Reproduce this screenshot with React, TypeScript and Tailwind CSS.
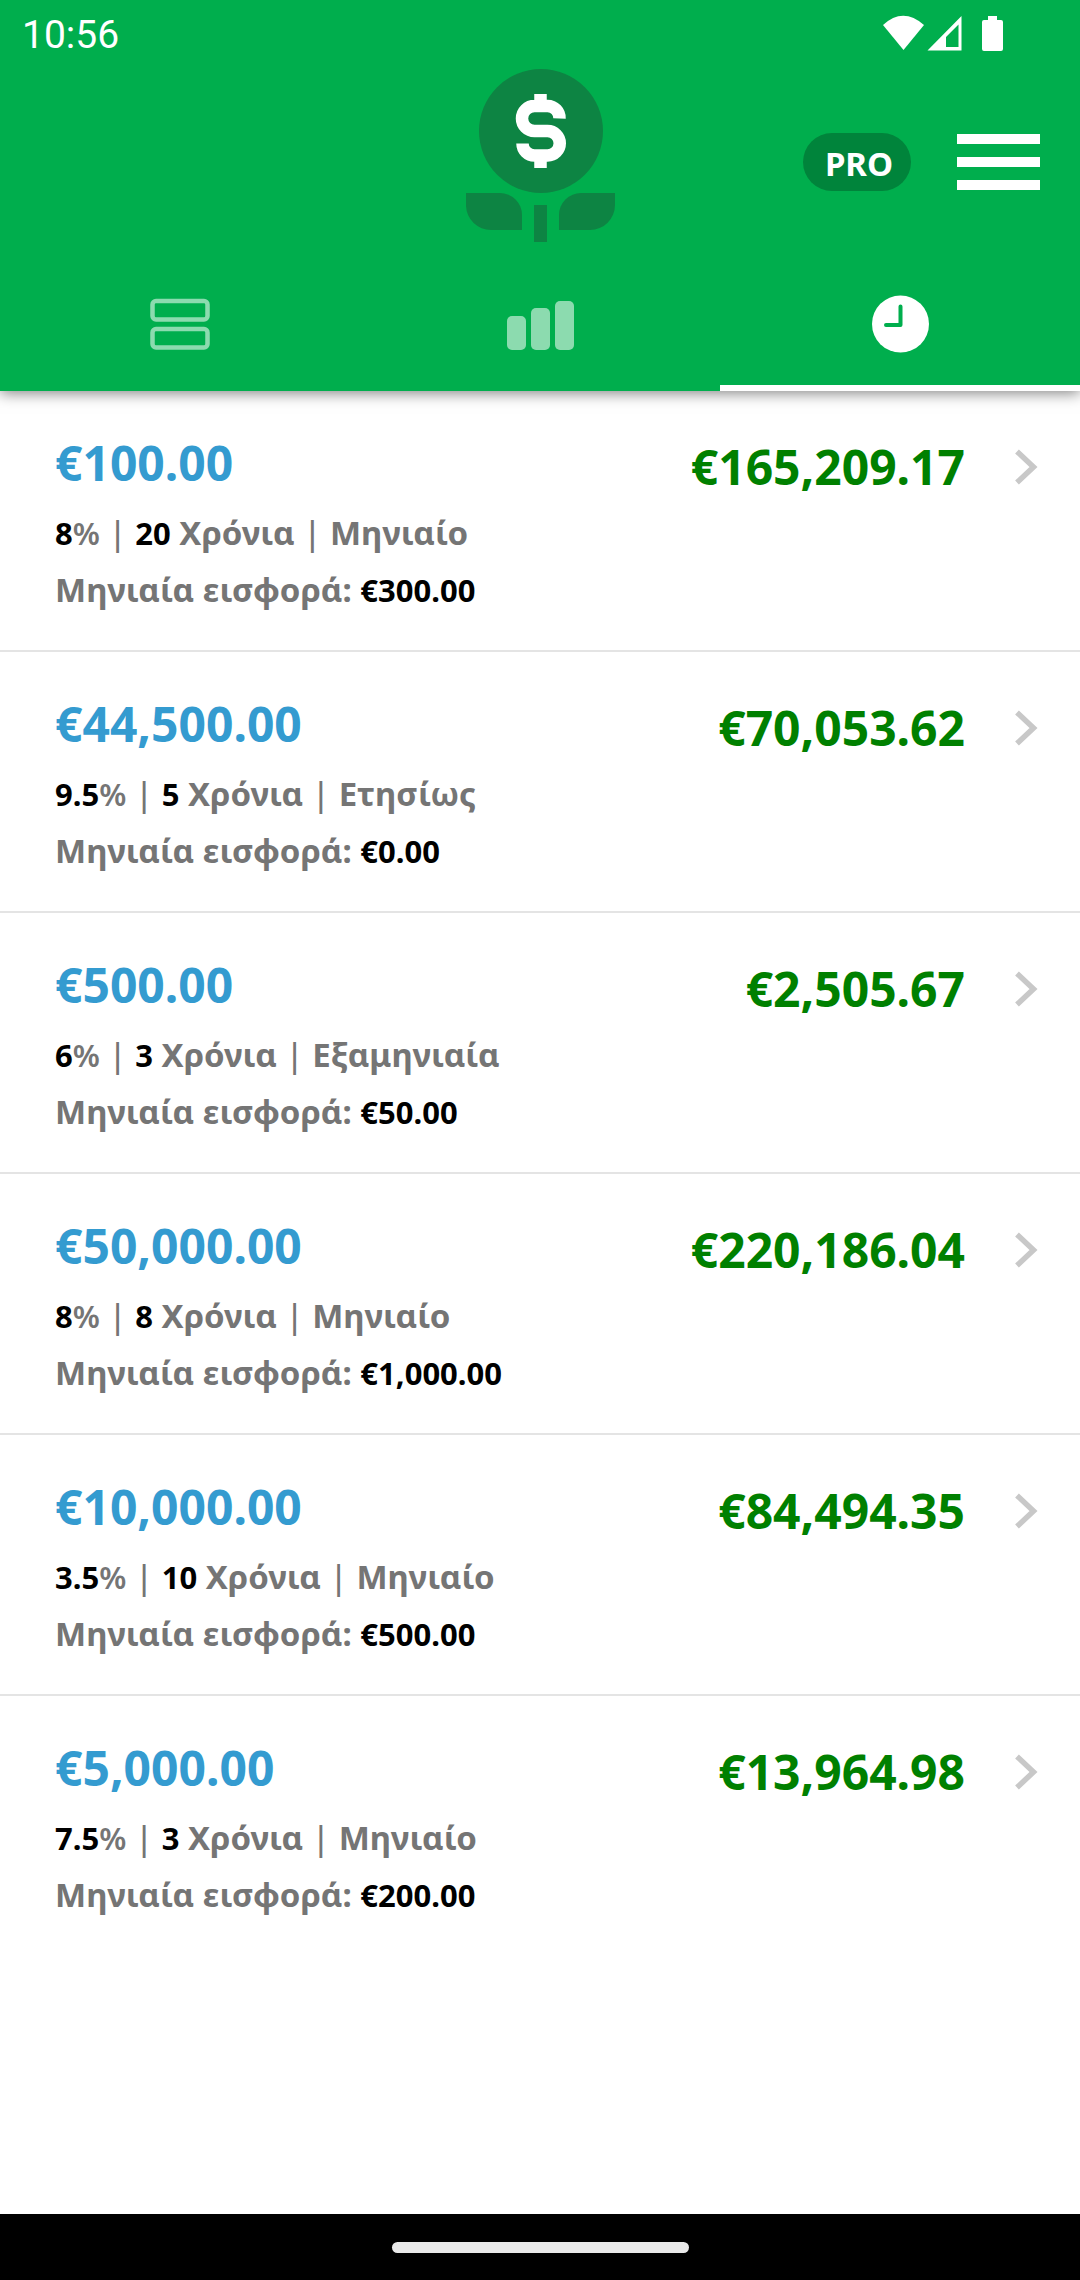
type Investment = {
    initial: string
    rate: string
    years: string
    interval: string
    contribution: string
    total: string
}

const investments: Investment[] = [
    { initial: "€100.00", rate: "8", years: "20", interval: "Μηνιαίο", contribution: "€300.00", total: "€165,209.17" },
    { initial: "€44,500.00", rate: "9.5", years: "5", interval: "Ετησίως", contribution: "€0.00", total: "€70,053.62" },
    { initial: "€500.00", rate: "6", years: "3", interval: "Εξαμηνιαία", contribution: "€50.00", total: "€2,505.67" },
    { initial: "€50,000.00", rate: "8", years: "8", interval: "Μηνιαίο", contribution: "€1,000.00", total: "€220,186.04" },
    { initial: "€10,000.00", rate: "3.5", years: "10", interval: "Μηνιαίο", contribution: "€500.00", total: "€84,494.35" },
    { initial: "€5,000.00", rate: "7.5", years: "3", interval: "Μηνιαίο", contribution: "€200.00", total: "€13,964.98" },
]

function StatusBar() {
    return (
        <div className="flex h-[66px] items-center justify-between pl-[22px] pr-[76px]">
            <span className="pt-1 font-[Roboto,sans-serif] text-[39px] leading-none">10:56</span>
            <svg className="h-[40px] w-[122px]" viewBox="0 0 122 40" fill="#fff" aria-hidden="true">
                <path d="M1 12Q21 -6.500 42 12L21.500 37Z" />
                <path fillRule="evenodd" d="M79.500 3V37.500H45.500ZM76.500 11.500L64 24V34H76.500Z" />
                <path d="M106 3h9v4h4a2 2 0 0 1 2 2v27a2 2 0 0 1-2 2h-17a2 2 0 0 1-2-2V9a2 2 0 0 1 2-2h4Z" />
            </svg>
        </div>
    )
}

function Logo() {
    return (
        <svg className="h-[174px] w-[149px]" viewBox="0 0 149 174" role="img" aria-label="Logo">
            <g fill="#0d8443">
                <circle cx="75" cy="62" r="62" />
                <path d="M0 124h34a22 22 0 0 1 22 22v15H25A25 25 0 0 1 0 137Z" />
                <path d="M149 124h-34a22 22 0 0 0-22 22v15h31a25 25 0 0 0 25-25Z" />
                <path d="M68 136h13v37H68Z" />
            </g>
            <path d="M93.500 49.500a12 12 0 0 0-12-12.500H68.500a12.500 12.500 0 0 0 0 25h13a12 12 0 0 1 0 24.500H68.500a12 12 0 0 1-12-12M74.500 25v8M74.500 91v8" fill="none" stroke="#fff" strokeWidth="12.500" />
        </svg>
    )
}

function CardsIcon() {
    return (
        <svg className="h-[60px] w-[60px]" viewBox="0 0 60 60" fill="none" stroke="currentColor" strokeWidth="4.500" aria-hidden="true">
            <rect x="2.500" y="6" width="55" height="18.500" rx="3.500" />
            <rect x="2.500" y="34" width="55" height="18.500" rx="3.500" />
        </svg>
    )
}

function BarsIcon() {
    return (
        <svg className="h-[60px] w-[68px]" viewBox="0 0 68 60" fill="currentColor" aria-hidden="true">
            <rect x="1" y="21" width="19" height="34" rx="5" />
            <rect x="25" y="13" width="19" height="42" rx="5" />
            <rect x="49" y="6" width="19" height="49" rx="5" />
        </svg>
    )
}

function ClockIcon() {
    return (
        <svg className="h-[60px] w-[60px]" viewBox="0 0 60 60" fill="none" aria-hidden="true">
            <circle cx="30.500" cy="29" r="28.500" fill="currentColor" />
            <path d="M30.500 11.500V30H16" stroke="#00ae4d" strokeWidth="4" strokeLinecap="round" strokeLinejoin="round" />
        </svg>
    )
}

function Header() {
    return (
        <header className="relative z-10 bg-[#00ae4d] text-white shadow-[0_2px_14px_rgba(0,0,0,0.5)]">
            <StatusBar />
            <div className="grid h-[192px] grid-cols-3 items-start">
                <div />
                <div className="flex justify-center pt-[3px]">
                    <Logo />
                </div>
                <div className="flex h-[192px] items-center justify-end gap-[46px] pr-10">
                    <button type="button" className="h-[58px] w-[108px] rounded-full bg-[#00843b] pl-1 pt-0.5 text-[33px] font-bold leading-none">
                        PRO
                    </button>
                    <button type="button" aria-label="Menu" className="flex w-[83px] flex-col gap-[13px]">
                        <span className="h-[10px] bg-white" />
                        <span className="h-[10px] bg-white" />
                        <span className="h-[10px] bg-white" />
                    </button>
                </div>
            </div>
            <nav className="grid h-[133px] grid-cols-3">
                <button type="button" aria-label="Calculator" className="flex items-center justify-center border-b-[6px] border-transparent pt-[6px] text-white/55">
                    <CardsIcon />
                </button>
                <button type="button" aria-label="Chart" className="flex items-center justify-center border-b-[6px] border-transparent pt-[6px] text-white/55">
                    <BarsIcon />
                </button>
                <button type="button" aria-label="History" className="flex items-center justify-center border-b-[6px] border-white pt-[6px]">
                    <ClockIcon />
                </button>
            </nav>
        </header>
    )
}

function InvestmentRow({ item }: { item: Investment }) {
    return (
        <li className="border-b-2 border-[#e4e4e4] last:border-none">
            <a href="#" className="flex items-start justify-between pb-8 pl-[55px] pr-[42px] pt-[38px]">
                <div className="text-[33px] font-bold leading-[57px] text-[#757575]">
                    <h2 className="mb-[7px] text-[48px] font-bold leading-[68px] text-[#349bd0]">{item.initial}</h2>
                    <p>
                        <span className="text-[31px] leading-none text-black">{item.rate}</span>
                        <span className="text-[31px] font-semibold leading-none">%</span> <span className="font-medium">|</span>{" "}
                        <span className="text-[31px] leading-none text-black">{item.years}</span> Χρόνια <span className="font-medium">|</span> {item.interval}
                    </p>
                    <p>
                        Μηνιαία εισφορά: <span className="text-[31px] leading-none text-black">{item.contribution}</span>
                    </p>
                </div>
                <div className="flex items-center gap-[49px] pt-1">
                    <span className="text-[48px] font-bold leading-[68px] text-[#008000]">{item.total}</span>
                    <svg className="h-[36px] w-[24px]" viewBox="0 0 24 36" fill="none" stroke="#c8c8c8" strokeWidth="5.500" aria-hidden="true">
                        <path d="M3 2.500L19.500 18L3 33.500" />
                    </svg>
                </div>
            </a>
        </li>
    )
}

export default function App() {
    return (
        <div className="flex min-h-screen flex-col bg-white font-['Noto_Sans',sans-serif]">
            <Header />
            <main className="flex-1">
                <ul>
                    {investments.map((item) => (
                        <InvestmentRow key={item.initial} item={item} />
                    ))}
                </ul>
            </main>
            <footer className="flex h-[66px] items-center justify-center bg-black">
                <div className="h-[11px] w-[297px] rounded-full bg-[#eaeaea]" />
            </footer>
        </div>
    )
}
